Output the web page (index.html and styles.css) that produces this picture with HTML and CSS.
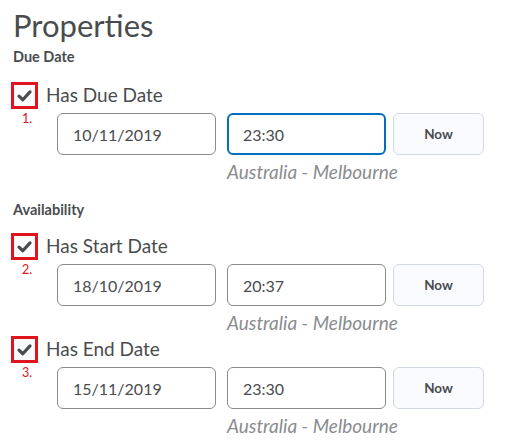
FILE: index.html
```html
<!DOCTYPE html>
<html>
<head>
<meta charset="utf-8">
<link rel="stylesheet" href="styles.css">
</head>
<body>
<div class="page">
  <h1 class="title">Properties</h1>
  <div class="section-label first">Due Date</div>
  <div class="block">
    <div class="check-row">
      <span class="check"><svg viewBox="0 0 16 16" width="17" height="17"><path d="M2.8 8.6 L6.4 12 L13.2 4.6" fill="none" stroke="#494c4e" stroke-width="3" stroke-linecap="round" stroke-linejoin="round"/></svg></span>
      <span class="check-label">Has Due Date</span>
    </div>
    <div class="field-row">
      <span class="num">1.</span>
      <div class="fields">
        <div class="inputs">
          <div class="input">10/11/2019</div>
          <div class="input focused">23:30</div>
          <div class="btn">Now</div>
        </div>
        <div class="tz">Australia - Melbourne</div>
      </div>
    </div>
  </div>
  <div class="section-label">Availability</div>
  <div class="block">
    <div class="check-row">
      <span class="check"><svg viewBox="0 0 16 16" width="17" height="17"><path d="M2.8 8.6 L6.4 12 L13.2 4.6" fill="none" stroke="#494c4e" stroke-width="3" stroke-linecap="round" stroke-linejoin="round"/></svg></span>
      <span class="check-label">Has Start Date</span>
    </div>
    <div class="field-row">
      <span class="num">2.</span>
      <div class="fields">
        <div class="inputs">
          <div class="input">18/10/2019</div>
          <div class="input">20:37</div>
          <div class="btn">Now</div>
        </div>
        <div class="tz">Australia - Melbourne</div>
      </div>
    </div>
  </div>
  <div class="block">
    <div class="check-row">
      <span class="check"><svg viewBox="0 0 16 16" width="17" height="17"><path d="M2.8 8.6 L6.4 12 L13.2 4.6" fill="none" stroke="#494c4e" stroke-width="3" stroke-linecap="round" stroke-linejoin="round"/></svg></span>
      <span class="check-label">Has End Date</span>
    </div>
    <div class="field-row">
      <span class="num">3.</span>
      <div class="fields">
        <div class="inputs">
          <div class="input">15/11/2019</div>
          <div class="input">23:30</div>
          <div class="btn">Now</div>
        </div>
        <div class="tz">Australia - Melbourne</div>
      </div>
    </div>
  </div>
</div>
</body>
</html>
```
FILE: styles.css
```css
html, body { margin: 0; padding: 0; background: #fff; }
body { font-family: Lato, "Open Sans", sans-serif; color: #494c4e; }
.page { padding: 6px 0 0 13px; }
.title {
  margin: 0;
  font-size: 31px;
  font-weight: 400;
  line-height: 38px;
  color: #494c4e;
}
.section-label {
  font-size: 14.5px;
  font-weight: 700;
  line-height: 16px;
  margin-top: 17px;
  color: #494c4e;
}
.section-label.first { margin-top: 5px; }
.section-label + .block { margin-top: 15px; }
.section-label.first + .block { margin-top: 17px; }
.check-row {
  display: flex;
  align-items: center;
  gap: 8px;
  height: 26px;
}
.check {
  box-sizing: border-box;
  width: 27px;
  height: 27px;
  border: 3px solid #e0141e;
  margin-left: -2px;
  background: #f9fafb;
  display: flex;
  align-items: center;
  justify-content: center;
}
.check-label {
  font-size: 19px;
  line-height: 26px;
  color: #494c4e;
}
.field-row {
  display: flex;
  margin-top: 5px;
}
.num {
  width: 44px;
  box-sizing: border-box;
  padding-left: 9px;
  font-size: 12.5px;
  line-height: 14px;
  color: #e0141e;
  margin-top: -1px;
}
.fields { display: flex; flex-direction: column; }
.inputs { display: flex; gap: 11px; }
.input {
  box-sizing: border-box;
  width: 159px;
  height: 42px;
  border: 1px solid #868c8f;
  border-radius: 6px;
  padding: 0 15px;
  display: flex;
  align-items: center;
  font-size: 16px;
  color: #494c4e;
}
.input.focused {
  border: 2px solid #006fbf;
  padding: 0 14px;
}
.btn {
  box-sizing: border-box;
  width: 91px;
  height: 42px;
  margin-left: -4px;
  border: 1px solid #d3d9e3;
  border-radius: 6px;
  background: #f9fbff;
  display: flex;
  align-items: center;
  justify-content: center;
  font-size: 13.5px;
  font-weight: 700;
  color: #494c4e;
}
.tz {
  margin-left: 170px;
  font-size: 19px;
  font-style: italic;
  line-height: 26px;
  color: #8a8c8e;
  margin-top: 4px;
  height: 26px;
}
```
